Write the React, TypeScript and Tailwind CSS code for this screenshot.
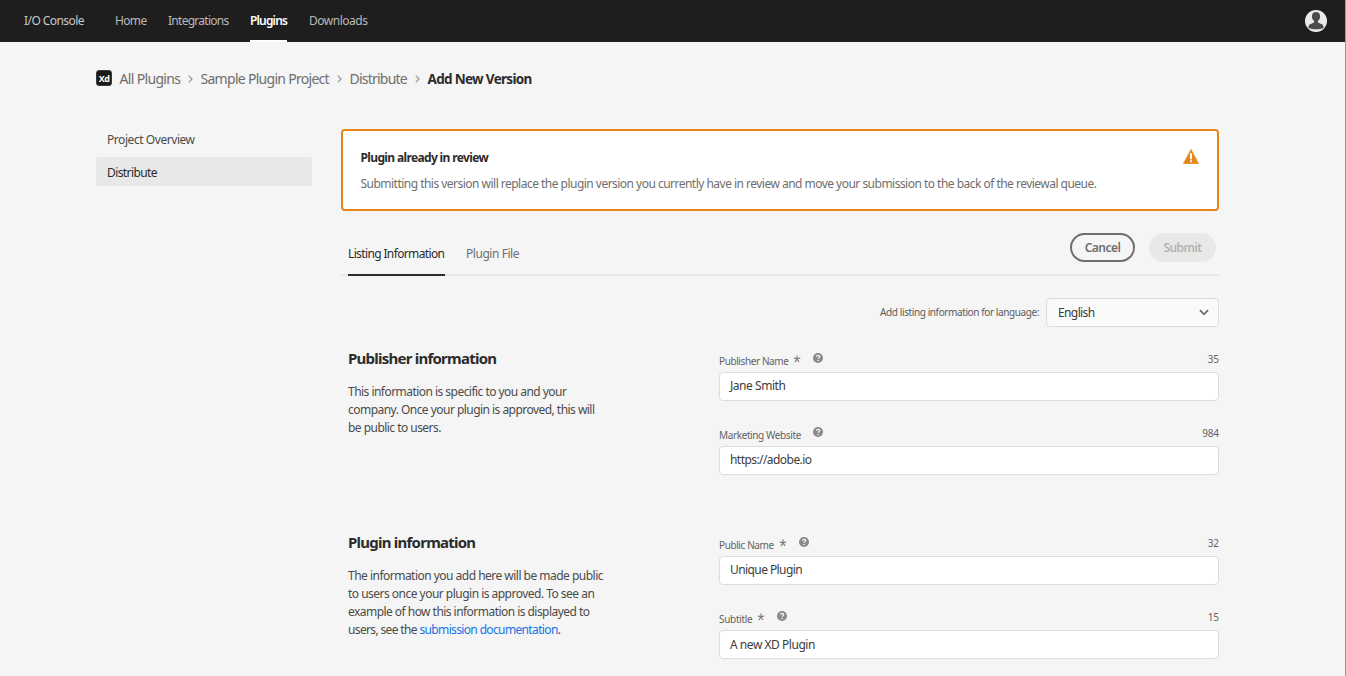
import type { ReactNode } from "react";
import clsx from "clsx";

const NAV = [
  { label: "Home", tone: "text-[#b9b9b9] tracking-[-0.65px] w-[31px]" },
  { label: "Integrations", tone: "text-[#b9b9b9] tracking-[-0.73px] w-[60px]" },
  { label: "Plugins", tone: "text-white font-semibold tracking-[-0.84px] w-[37px]", active: true },
  { label: "Downloads", tone: "text-[#b9b9b9] tracking-[-0.49px] w-[59px]" },
];

function Avatar() {
  return (
    <svg viewBox="0 0 22 22" className="size-[22px]">
      <circle cx="11" cy="11" r="11" fill="#ebebeb" />
      <path
        d="M11 2c-2.800 0-4.200 2-4.100 4.400.1 2 .8 3.400 1.900 4.400.4.500.4 1.500-.2 1.900-1.500.9-5.100 1-5.100 4.200v1c1.700.9 4.500 1.300 7.500 1.300s5.800-.4 7.500-1.300v-1c0-3.200-3.600-3.300-5.100-4.200-.6-.4-.6-1.400-.2-1.900 1.100-1 1.800-2.400 1.900-4.400.1-2.400-1.300-4.400-4.100-4.400z"
        fill="#4b4b4b"
      />
    </svg>
  );
}

function Crumb({ children, className }: { children: ReactNode; className: string }) {
  return (
    <>
      <span className={clsx("shrink-0 whitespace-nowrap", className)}>{children}</span>
      <svg viewBox="0 0 5 8" className="mx-[8px] h-[8px] w-[5px] shrink-0" fill="none" stroke="#929292" strokeWidth="1.1">
        <path d="M.8.700 4.100 4 .8 7.300" />
      </svg>
    </>
  );
}

function HelpIcon() {
  return (
    <svg viewBox="0 0 10 10" className="size-[10px] shrink-0">
      <circle cx="5" cy="5" r="5" fill="#8a8a8a" />
      <path d="M3.500 3.800c.1-1 .700-1.500 1.600-1.500s1.600.5 1.600 1.300c0 1-1.500 1.100-1.500 2.200" fill="none" stroke="#f5f5f5" strokeWidth="1.300" />
      <circle cx="5.150" cy="7.500" r=".8" fill="#f5f5f5" />
    </svg>
  );
}

function Asterisk() {
  return (
    <svg viewBox="0 0 8 8" className="ml-[4px] size-[8px] shrink-0" fill="none" stroke="#7c7c7c" strokeWidth="1.200">
      <path d="M4 4V.6M4 4 .8 2.900M4 4l3.200-1.100M4 4 2 6.900M4 4l2 2.900" />
    </svg>
  );
}

type FieldProps = {
  label: string;
  labelClass: string;
  required?: boolean;
  count: string;
  value: string;
  valueClass: string;
};

function Field({ label, labelClass, required, count, value, valueClass }: FieldProps) {
  return (
    <div className="h-[74px]">
      <div className="flex h-[22px] justify-between text-[10px] leading-[22px] text-[#636363]">
        <div className="flex items-start">
          <span className={clsx("whitespace-nowrap", labelClass)}>{label}</span>
          {required && (
            <span className="pt-[5px]">
              <Asterisk />
            </span>
          )}
          <span className="ml-[12px] pt-[3px]">
            <HelpIcon />
          </span>
        </div>
        <span className="-mt-[2px] tracking-[-0.1px]">{count}</span>
      </div>
      <div
        className={clsx(
          "h-[29px] rounded-[4px] border border-[#dcdcdc] bg-white pl-[10px] text-[12px] text-[#3c3c3c]",
          valueClass,
        )}
      >
        {value}
      </div>
    </div>
  );
}

function Section({ title, copy, children }: { title: string; copy: ReactNode; children: ReactNode }) {
  return (
    <section className="flex h-[184px] justify-between">
      <div className="ml-[7px]">
        <h2 className="h-[20px] text-[15px] leading-[20px] font-bold tracking-[-0.76px] text-[#2c2c2c]">{title}</h2>
        <p className="mt-[15px] text-[12px] leading-[18px] whitespace-nowrap text-[#4b4b4b]">{copy}</p>
      </div>
      <div className="w-[500px] pt-[2px]">{children}</div>
    </section>
  );
}

export default function App() {
  return (
    <div className="flex h-[676px] w-[1346px] overflow-hidden bg-[#f5f5f5] font-['Noto_Sans',sans-serif]">
      <div className="flex-1">
        <header className="flex h-[42px] bg-[#1e1e1e] pl-[24px] text-[12px] leading-[41px]">
          <span className="w-[91px] tracking-[-0.56px] text-[#c8c8c8]">I/O Console</span>
          <nav className="flex gap-[22px]">
            {NAV.map((n) => (
              <a key={n.label} className={clsx("h-[42px] whitespace-nowrap", n.tone, n.active && "border-b-2 border-white")}>
                {n.label}
              </a>
            ))}
          </nav>
          <div className="mr-[18px] ml-auto pt-[9.500px]">
            <Avatar />
          </div>
        </header>

        <div className="mt-[26px] ml-[96px] flex h-[22px] items-center text-[14px] leading-[22px] text-[#6e6e6e]">
          <span className="mr-[8px] -mt-[2px] flex size-[16px] items-center justify-center rounded-[3px] border border-[#3a3a3a] bg-[#1b1b1b] text-[9px] leading-[13px] font-bold tracking-[-0.5px] text-white">
            Xd
          </span>
          <Crumb className="-ml-[0.500px] w-[60px] tracking-[-0.66px]">All Plugins</Crumb>
          <Crumb className="w-[128px] tracking-[-0.71px]">Sample Plugin Project</Crumb>
          <Crumb className="w-[57px] tracking-[-0.78px]">Distribute</Crumb>
          <span className="text-[13.5px] font-bold tracking-[-0.68px] text-[#2c2c2c]">Add New Version</span>
        </div>

        <div className="mt-[39px] ml-[96px] flex gap-[29px]">
          <aside className="w-[216px] text-[12px]">
            <div className="h-[28px] pl-[11px] leading-[22px] tracking-[-0.44px] text-[#4b4b4b]">Project Overview</div>
            <div className="h-[29px] rounded-[3px] bg-[#e8e8e8] pl-[11px] leading-[32px] tracking-[-0.6px] text-[#2c2c2c]">
              Distribute
            </div>
          </aside>

          <main className="w-[878px]">
            <div className="flex h-[82px] justify-between rounded-[4px] border-2 border-[#e68619] bg-white pr-[18px] pl-[17.500px]">
              <div className="pt-[16px] text-[12px]">
                <div className="leading-[22px] font-bold tracking-[-0.64px] text-[#2c2c2c]">Plugin already in review</div>
                <p className="mt-[4px] leading-[22px] tracking-[-0.52px] whitespace-nowrap text-[#6e6e6e]">
                  Submitting this version will replace the plugin version you currently have in review and move your submission to
                  the back of the reviewal queue.
                </p>
              </div>
              <svg viewBox="0 0 16 15" className="mt-[18px] h-[15px] w-[16px]">
                <path d="M8 .3 15.700 14.700H.3z" fill="#e68619" stroke="#e68619" strokeWidth=".5" strokeLinejoin="round" />
                <path d="M7 4.200h2v6H7zM7 11.200h2v2H7z" fill="#fff" />
              </svg>
            </div>

            <div className="flex h-[65px] border-b-2 border-[#e8e8e8] pl-[7px] text-[12px]">
              <div className="mt-[32px] h-[33px] w-[97px] border-b-2 border-[#2c2c2c] leading-[22px] tracking-[-0.63px] whitespace-nowrap text-[#2c2c2c]">
                Listing Information
              </div>
              <div className="mt-[32px] ml-[21px] leading-[22px] tracking-[-0.45px] text-[#6e6e6e]">Plugin File</div>
              <button className="mt-[22px] ml-auto h-[29px] w-[65px] rounded-full border-2 border-[#6e6e6e] leading-[24px] font-semibold tracking-[-0.55px] text-[#6e6e6e]">
                Cancel
              </button>
              <button className="mt-[22px] mr-[3px] ml-[14px] h-[29px] w-[67px] rounded-full bg-[#e8e8e8] leading-[28px] font-semibold tracking-[-0.6px] text-[#b3b3b3]">
                Submit
              </button>
            </div>

            <div className="mt-[22px] flex h-[29px] justify-end">
              <span className="mr-[7px] text-[10px] leading-[28px] tracking-[-0.4px] text-[#5c5c5c]">
                Add listing information for language:
              </span>
              <div className="flex w-[173px] items-center justify-between rounded-[4px] border border-[#dcdcdc] bg-[#fafafa] pr-[9px] pl-[11px] text-[12px] leading-[28px] tracking-[-0.61px] text-[#3a3a3a]">
                English
                <svg viewBox="0 0 10 7" className="h-[7px] w-[10px]" fill="none" stroke="#6b6b6b" strokeWidth="1.800">
                  <path d="M.900 1.200 5 5.300l4.100-4.100" />
                </svg>
              </div>
            </div>

            <div className="mt-[21px]">
              <Section
                title="Publisher information"
                copy={
                  <span className="tracking-[-0.535px]">
                    This information is specific to you and your
                    <br />
                    company. Once your plugin is approved, this will
                    <br />
                    be public to users.
                  </span>
                }
              >
                <Field label="Publisher Name" labelClass="tracking-[-0.4px] w-[70px]" required count="35" value="Jane Smith" valueClass="leading-[26px] tracking-[-0.46px]" />
                <Field label="Marketing Website" labelClass="tracking-[-0.38px] w-[82px]" count="984" value="https://adobe.io" valueClass="leading-[26px] tracking-[-0.56px]" />
              </Section>
              <Section
                title="Plugin information"
                copy={
                  <span className="tracking-[-0.517px]">
                    The information you add here will be made public
                    <br />
                    to users once your plugin is approved. To see an
                    <br />
                    <span className="tracking-[-0.54px]">example of how this information is displayed to</span>
                    <br />
                    <span className="tracking-[-0.64px]">
                      users, see the <a className="text-[#1473e6]">submission documentation</a>.
                    </span>
                  </span>
                }
              >
                <Field label="Public Name" labelClass="tracking-[-0.4px] w-[56px]" required count="32" value="Unique Plugin" valueClass="leading-[26px] tracking-[-0.58px]" />
                <Field label="Subtitle" labelClass="tracking-[-0.3px] w-[34px]" required count="15" value="A new XD Plugin" valueClass="leading-[28px] tracking-[-0.46px]" />
              </Section>
            </div>
          </main>
        </div>
      </div>
      <div className="h-full w-px bg-[#9a9a9a]" />
    </div>
  );
}
